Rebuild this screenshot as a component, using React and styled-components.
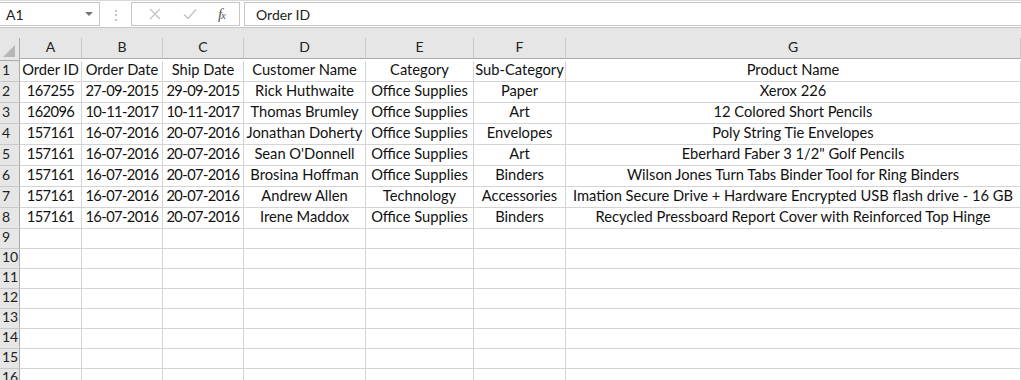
import React from 'react'
import styled, { createGlobalStyle } from 'styled-components'

const GlobalStyle = createGlobalStyle`
  html, body {
    margin: 0;
    padding: 0;
    background: #ffffff;
    overflow: hidden;
  }
  body {
    font-family: Lato, "Liberation Sans", sans-serif;
  }
`

const columns = [
  { key: 'A', width: 62 },
  { key: 'B', width: 81 },
  { key: 'C', width: 81 },
  { key: 'D', width: 122 },
  { key: 'E', width: 108 },
  { key: 'F', width: 92 },
  { key: 'G', width: 455 },
]

const rows = [
  ['Order ID', 'Order Date', 'Ship Date', 'Customer Name', 'Category', 'Sub-Category', 'Product Name'],
  ['167255', '27-09-2015', '29-09-2015', 'Rick Huthwaite', 'Office Supplies', 'Paper', 'Xerox 226'],
  ['162096', '10-11-2017', '10-11-2017', 'Thomas Brumley', 'Office Supplies', 'Art', '12 Colored Short Pencils'],
  ['157161', '16-07-2016', '20-07-2016', 'Jonathan Doherty', 'Office Supplies', 'Envelopes', 'Poly String Tie Envelopes'],
  ['157161', '16-07-2016', '20-07-2016', "Sean O'Donnell", 'Office Supplies', 'Art', 'Eberhard Faber 3 1/2" Golf Pencils'],
  ['157161', '16-07-2016', '20-07-2016', 'Brosina Hoffman', 'Office Supplies', 'Binders', 'Wilson Jones Turn Tabs Binder Tool for Ring Binders'],
  ['157161', '16-07-2016', '20-07-2016', 'Andrew Allen', 'Technology', 'Accessories', 'Imation Secure Drive + Hardware Encrypted USB flash drive - 16 GB'],
  ['157161', '16-07-2016', '20-07-2016', 'Irene Maddox', 'Office Supplies', 'Binders', 'Recycled Pressboard Report Cover with Reinforced Top Hinge'],
]

const emptyRows = [9, 10, 11, 12, 13, 14, 15, 16]

const gridTemplate = `20px ${columns.map(c => c.width + 'px').join(' ')}`

const isNumeric = v => /^[\d-]+$/.test(v)

export default function App() {
  return (
    <>
      <GlobalStyle />
      <Window>
        <FormulaBar>
          <NameBox>
            <span>A1</span>
            <Caret />
          </NameBox>
          <Grip>⋮</Grip>
          <ActionBox>
            <svg width="14" height="14" viewBox="0 0 14 14">
              <path d="M2 2 L12 12 M12 2 L2 12" stroke="#c3c3c3" strokeWidth="1.3" fill="none" />
            </svg>
            <svg width="16" height="14" viewBox="0 0 16 14">
              <path d="M2 7.5 L6 11.5 L14 2.5" stroke="#c3c3c3" strokeWidth="1.5" fill="none" />
            </svg>
            <Fx>f<sub>x</sub></Fx>
          </ActionBox>
          <FormulaInput>Order ID</FormulaInput>
        </FormulaBar>

        <Spacer />

        <Sheet style={{ gridTemplateColumns: gridTemplate }}>
          <Corner>
            <svg width="14" height="14" viewBox="0 0 14 14">
              <polygon points="13,1 13,13 1,13" fill="#b7b7b7" />
            </svg>
          </Corner>
          {columns.map(c => (
            <ColHead key={c.key}>{c.key}</ColHead>
          ))}

          {rows.map((row, i) => (
            <React.Fragment key={i}>
              <RowHead $tall>{i + 1}</RowHead>
              {row.map((val, j) => (
                <Cell key={j} $tall $num={isNumeric(val)}>{val}</Cell>
              ))}
            </React.Fragment>
          ))}

          {emptyRows.map(n => (
            <React.Fragment key={n}>
              <RowHead>{n}</RowHead>
              {columns.map(c => (
                <Cell key={c.key} />
              ))}
            </React.Fragment>
          ))}
        </Sheet>
      </Window>
    </>
  )
}

const Window = styled.div`
  width: 1021px;
  height: 380px;
  overflow: hidden;
  background: #ffffff;
`

const FormulaBar = styled.div`
  display: flex;
  align-items: center;
  background: #ffffff;
  border-top: 1px solid #d9d9d9;
  border-bottom: 1px solid #c6c6c6;
  box-sizing: border-box;
  height: 28px;
`

const NameBox = styled.div`
  width: 100px;
  height: 24px;
  box-sizing: border-box;
  border: 1px solid #c6c6c6;
  border-left: none;
  display: flex;
  align-items: center;
  justify-content: space-between;
  padding: 0 6px 0 6px;
  font-size: 14px;
  color: #222;
`

const Caret = styled.span`
  width: 0;
  height: 0;
  border-left: 4px solid transparent;
  border-right: 4px solid transparent;
  border-top: 4px solid #777;
`

const Grip = styled.div`
  width: 31px;
  text-align: center;
  color: #b0b0b0;
  font-size: 14px;
`

const ActionBox = styled.div`
  width: 109px;
  height: 24px;
  box-sizing: border-box;
  border: 1px solid #c6c6c6;
  display: flex;
  align-items: center;
  justify-content: space-around;
  padding: 0 4px 0 6px;
`

const Fx = styled.span`
  font-family: "Liberation Serif", serif;
  font-style: italic;
  font-size: 15px;
  color: #555;
  letter-spacing: -1px;

  sub {
    font-size: 11px;
    vertical-align: 0;
  }
`

const FormulaInput = styled.div`
  flex: 1;
  height: 24px;
  margin-left: 4px;
  box-sizing: border-box;
  border: 1px solid #c6c6c6;
  border-right: none;
  display: flex;
  align-items: center;
  padding-left: 11px;
  font-size: 14px;
  color: #222;
`

const Spacer = styled.div`
  height: 10px;
  background: #e6e6e6;
`

const Sheet = styled.div`
  display: grid;
  font-size: 14.7px;
  line-height: 1;
  color: #111;
`

const Corner = styled.div`
  height: 20px;
  background: #e6e6e6;
  border-bottom: 1px solid #ababab;
  border-right: 1px solid #ababab;
  display: flex;
  align-items: flex-end;
  justify-content: flex-end;
  padding: 0 3px 2px 0;
  box-sizing: content-box;
`

const ColHead = styled.div`
  height: 21px;
  box-sizing: border-box;
  background: #e6e6e6;
  border-bottom: 1px solid #ababab;
  border-right: 1px solid #c8c8c8;
  display: flex;
  align-items: center;
  justify-content: center;
  padding-bottom: 2px;
  font-size: 14px;
  color: #222;
`

const RowHead = styled.div`
  height: ${p => (p.$tall ? '21px' : '20px')};
  box-sizing: border-box;
  background: #e6e6e6;
  border-bottom: 1px solid #c8c8c8;
  border-right: 1px solid #ababab;
  display: flex;
  align-items: center;
  padding: 0 0 3px 2px;
  font-size: 14px;
  color: #222;
`

const Cell = styled.div`
  height: ${p => (p.$tall ? '21px' : '20px')};
  box-sizing: border-box;
  border-bottom: 1px solid #d4d4d4;
  border-right: 1px solid #d4d4d4;
  display: flex;
  align-items: center;
  justify-content: center;
  padding-bottom: 3px;
  white-space: nowrap;
  overflow: hidden;
  letter-spacing: ${p => (p.$num ? '-0.6px' : '0')};
`
